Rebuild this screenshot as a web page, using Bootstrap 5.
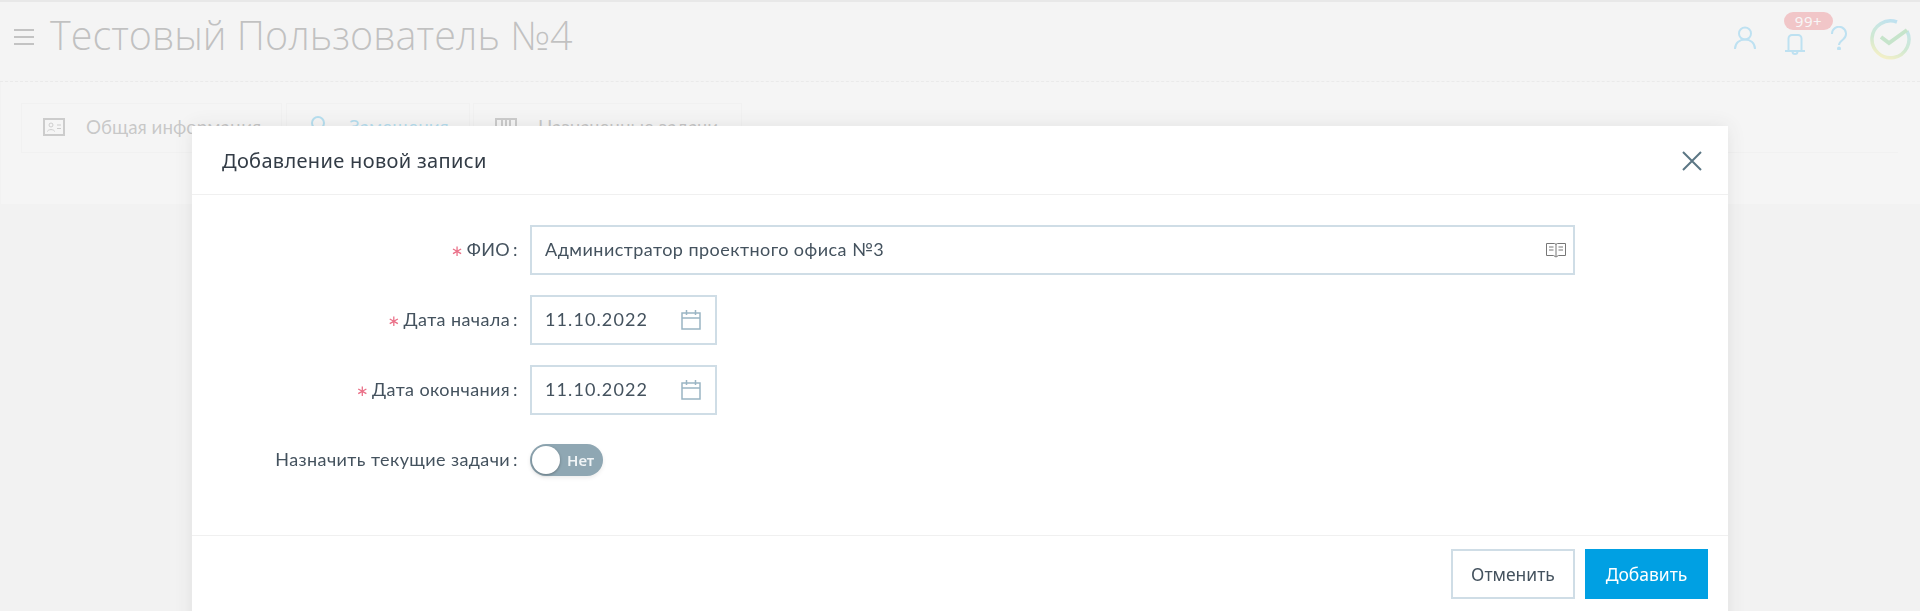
<!doctype html>
<html lang="ru"><head><meta charset="utf-8"><title>Тестовый Пользователь №4</title>
<link href="https://cdn.jsdelivr.net/npm/bootstrap@5.3.0/dist/css/bootstrap.min.css" rel="stylesheet">
<style>
html,body{height:611px;overflow:hidden}
body{background:#ececec;font-family:"Lato","Noto Sans",sans-serif;color:#44525e;border-top:2px solid #c4c4c4}
.topbar{height:80px;padding:0 9px 0 13px;border-bottom:1px dashed #ccc;gap:15px;background:#f4f4f4}
.burger{width:22px;height:18px;stroke:#333;margin-bottom:10px}
.page-title{font-family:"Open Sans",sans-serif;font-weight:300;font-size:39.500px;color:#2a2a2a;margin:0;line-height:1;padding-bottom:12px}
.top-icons{margin-left:auto;height:44px;align-items:flex-start}
.ic-user{margin-top:6px}
.bell-wrap{position:relative;margin:11px 26px 0 29px;width:20px;height:22px}
.bell-badge{position:absolute;left:-1px;top:-19px;width:49px;height:18px;border-radius:9px;background:#e83c46;color:#fff;font:15px/18px "Noto Sans",sans-serif;letter-spacing:.6px;text-align:center;padding:0}
.ic-help{margin-top:6px}
.ic-logo{margin-left:22px;margin-top:-2px}
.tabs-panel{margin-left:1px;padding:21px 22px 0 20px;height:122px;background:#f8f8f8}
.tab-strip{height:50px;border-bottom:1px solid #e6e6e6;flex:1}
.tab-item{height:50px;border:1px solid #e8e8e8;padding:0 20px 2px 21px;gap:21px;font-size:18.800px;color:#444}
.tab-first{width:261px;margin-right:4px;gap:21px}
.tab-second{width:184px;margin-right:3px;padding-left:23px;gap:23px}
.tab-third{width:269px}
.tab-item svg{flex:none}
.tab-on{color:#00a0e3}
.shade{position:fixed;inset:0;background:rgba(244,244,244,.75);z-index:5}
.dlg{position:fixed;left:192px;top:126px;width:1536px;height:520px;z-index:6;border:0;border-radius:0;background:#fff;box-shadow:0 0 18px rgba(0,0,0,.09)}
.dlg .modal-header{height:69px;padding:2px 26px 0 30px;border-bottom:1px solid #f0f0f0}
.dlg-title{font-family:"Noto Sans",sans-serif;font-size:20px;letter-spacing:.33px;color:#333c46;margin:0;font-weight:400}
.dlg .modal-body{height:340px;padding:30px 0 0;flex:none}
.dlg .modal-footer{height:64px;padding:13px 20px 0;align-items:flex-start;border-top:1px solid #f0f0f0;gap:10px;flex-wrap:nowrap;border-radius:0}
.dlg .modal-footer>*{margin:0}
.x-btn{background:none;border:0;padding:0;line-height:0}
.frow{height:50px;margin-bottom:20px}
.flabel{width:338px;padding:0 12px 2px 0;font-size:18px;letter-spacing:.4px;color:#44525e;text-align:right}
.flabel i{font-style:normal;color:#ea7088;margin-right:3px;font-family:"DejaVu Sans",sans-serif;font-size:15px}
.flabel b{font-weight:400;margin-left:3px}
.ffield{width:1045px;height:50px;border:2px solid #cfdde6;padding:0 7px 0 13px;font-size:18px;letter-spacing:.45px;color:#44525e;background:#fff}
.ffield span{padding-bottom:2px}
.ffield svg{flex:none}
.fdate{width:187px;padding-right:14px;letter-spacing:1.1px}
.switcher{width:73px;height:32px;border-radius:16px;background:#8fa7b3;padding:2px;color:#f0f4f6;font:600 15px "Noto Sans",sans-serif;gap:7px;box-shadow:0 2px 4px rgba(0,0,0,.08)}
.knob{width:28px;height:28px;background:#fff;border-radius:50%;display:block;flex:none;box-shadow:0 1px 3px rgba(0,0,0,.3)}
.bt-cancel,.bt-add{height:50px;border-radius:0;font:17.500px "Noto Sans",sans-serif;width:124px;padding:0}
.bt-cancel{background:#fff;border:2px solid #cfdde6;color:#44525e}
.bt-add{background:#00a0e3;border:0;color:#fff;width:123px}
.bt-add:hover{background:#00a0e3;color:#fff}
</style></head><body>
<div class="d-flex align-items-center topbar">
<svg class="burger" viewBox="0 0 22 18" fill="none" stroke-width="2"><path d="M1 2h20M1 9h20M1 16h20"/></svg>
<h1 class="page-title">Тестовый Пользователь №4</h1>
<div class="d-flex top-icons">
<svg class="ic-user" width="22" height="24" viewBox="0 0 22 24" fill="none" stroke="#1ea7e8" stroke-width="2"><circle cx="11" cy="7.500" r="6"/><path d="M1 23c0-6 4.500-9.500 10-9.500s10 3.500 10 9.500"/></svg>
<div class="bell-wrap"><span class="bell-badge">99+</span>
<svg width="20" height="22" viewBox="0 0 20 22" fill="none" stroke="#1ea7e8" stroke-width="2"><path d="M3.500 18V5.500A3.500 3.500 0 0 1 7 2h6a3.500 3.500 0 0 1 3.500 3.500V18M0 18h20M7.500 18.500a2.500 2.500 0 0 0 5 0"/></svg></div>
<svg class="ic-help" width="16" height="24" viewBox="0 0 16 24" fill="none" stroke="#1ea7e8" stroke-width="2"><path d="M1 8a7 7 0 1 1 11 5.500c-2.500 2-4 3-4 5.500"/><circle cx="8" cy="22.500" r="1" fill="#1ea7e8"/></svg>
<svg class="ic-logo" width="42" height="42" viewBox="0 0 42 42" fill="none" stroke-width="3.500"><defs><linearGradient id="lg" x1=".7" y1="0" x2=".3" y2="1"><stop offset="0" stop-color="#1ea7e8"/><stop offset=".35" stop-color="#4fbfa0"/><stop offset=".6" stop-color="#5fc36e"/><stop offset="1" stop-color="#f0e040"/></linearGradient></defs><path d="M38 13A18.500 18.500 0 1 1 28 4" stroke="url(#lg)"/><path d="M12 19l8 6 18-13" stroke="#3fb34f" stroke-width="4"/></svg>
</div></div>
<div class="d-flex tabs-panel"><div class="d-flex tab-strip">
<div class="d-flex align-items-center tab-item tab-first"><svg width="22" height="18" viewBox="0 0 22 18" fill="none" stroke="#555" stroke-width="2"><rect x="1" y="1" width="20" height="16"/><circle cx="8" cy="7" r="2" stroke-width="1"/><path d="M4.500 13.500c0-2.500 7-2.500 7 0M14 7h4M14 10.500h4" stroke-width="1"/></svg><span class="text-nowrap">Общая информация</span></div>
<div class="d-flex align-items-center tab-item tab-second tab-on"><svg width="16" height="22" viewBox="0 0 16 22" fill="none" stroke="#00a0e3" stroke-width="2"><circle cx="8" cy="7" r="6"/><path d="M1 21c0-4 3-7 7-7s7 3 7 7"/></svg><span>Замещения</span></div>
<div class="d-flex align-items-center tab-item tab-third"><svg width="22" height="18" viewBox="0 0 22 18" fill="none" stroke="#555" stroke-width="2"><path d="M1 1h20v16H1zM7 1v12M11 1v12M15 1v12"/></svg><span class="text-nowrap">Назначенные задачи</span></div>
</div></div>
<div class="shade"></div>
<div class="modal-content dlg">
<div class="modal-header"><h5 class="dlg-title">Добавление новой записи</h5>
<button class="x-btn ms-auto" type="button" aria-label="Закрыть"><svg width="20" height="20" viewBox="0 0 20 20" fill="none" stroke="#5b7684" stroke-width="2"><path d="M1 1l18 18M19 1L1 19"/></svg></button></div>
<div class="modal-body">
<div class="d-flex align-items-center frow"><div class="flabel"><i>∗</i>ФИО<b>:</b></div><div class="d-flex align-items-center justify-content-between ffield"><span>Администратор проектного офиса №3</span><svg width="20" height="16" viewBox="0 0 20 16" fill="none" stroke="#777" stroke-width="1"><path d="M.5 1.500h8c1 0 1.500.5 1.500 1.500 0-1 .5-1.500 1.500-1.500h8v12h-7l-2.500 1.500-2.500-1.500h-7zM10 3v11M3 5h4.500M3 8h4.500M12.500 5H17M12.500 8H17"/></svg></div></div>
<div class="d-flex align-items-center frow"><div class="flabel"><i>∗</i>Дата начала<b>:</b></div><div class="d-flex align-items-center justify-content-between ffield fdate"><span>11.10.2022</span><svg width="20" height="20" viewBox="0 0 20 20" fill="none" stroke="#9ab5c4" stroke-width="1.500"><path d="M1 3h18v16H1zM1 8h18M5.500 0v5M14.500 0v5"/></svg></div></div>
<div class="d-flex align-items-center frow"><div class="flabel"><i>∗</i>Дата окончания<b>:</b></div><div class="d-flex align-items-center justify-content-between ffield fdate"><span>11.10.2022</span><svg width="20" height="20" viewBox="0 0 20 20" fill="none" stroke="#9ab5c4" stroke-width="1.500"><path d="M1 3h18v16H1zM1 8h18M5.500 0v5M14.500 0v5"/></svg></div></div>
<div class="d-flex align-items-center frow"><div class="flabel">Назначить текущие задачи<b>:</b></div><div class="d-flex align-items-center switcher"><span class="knob"></span><span>Нет</span></div></div>
</div>
<div class="modal-footer justify-content-end"><button class="btn bt-cancel" type="button">Отменить</button><button class="btn bt-add" type="button">Добавить</button></div>
</div>
</body></html>
